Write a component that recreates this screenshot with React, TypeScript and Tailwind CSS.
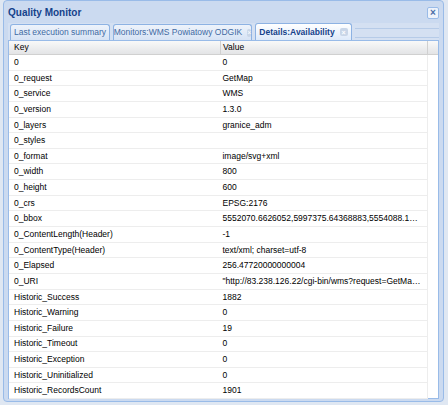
const rows: [string, string][] = [
  ['0', '0'],
  ['0_request', 'GetMap'],
  ['0_service', 'WMS'],
  ['0_version', '1.3.0'],
  ['0_layers', 'granice_adm'],
  ['0_styles', ''],
  ['0_format', 'image/svg+xml'],
  ['0_width', '800'],
  ['0_height', '600'],
  ['0_crs', 'EPSG:2176'],
  ['0_bbox', '5552070.6626052,5997375.64368883,5554088.16265523,5999000.1'],
  ['0_ContentLength(Header)', '-1'],
  ['0_ContentType(Header)', 'text/xml; charset=utf-8'],
  ['0_Elapsed', '256.47720000000004'],
  ['0_URI', '"http://83.238.126.22/cgi-bin/wms?request=GetMap&service=WMS'],
  ['Historic_Success', '1882'],
  ['Historic_Warning', '0'],
  ['Historic_Failure', '19'],
  ['Historic_Timeout', '0'],
  ['Historic_Exception', '0'],
  ['Historic_Uninitialized', '0'],
  ['Historic_RecordsCount', '1901'],
];

const TabClose = () => (
  <span className="ml-[5px] inline-flex h-[8px] w-[8px] items-center justify-center rounded-[2px] bg-[#c9d6e8] text-[7px] leading-none text-white">
    ×
  </span>
);

const App = () => {
  return (
    <div className="h-[405px] w-[448px] overflow-hidden bg-[#dfe7f2] pl-[3px] font-['Liberation_Sans',Arial,sans-serif] text-[8.5px]">
      <div className="flex h-[402px] w-[441px] flex-col rounded-[4px] border border-[#99bbe8] bg-[#cbdaf0] px-[4px] pb-[2px]">
        {/* title bar */}
        <div className="flex h-[22px] shrink-0 items-center justify-between pt-[1px]">
          <span className="text-[10px] font-bold text-[#15428b]">Quality Monitor</span>
          <span className="flex h-[12px] w-[12px] items-center justify-center rounded-[2px] border border-[#99bbe8] bg-[#eef3fb] text-[10px] font-bold leading-none text-[#4a6ea6]">
            ×
          </span>
        </div>
        {/* tab strip */}
        <div className="flex h-[18px] shrink-0 items-end gap-[3px] border-b border-[#99bbe8] bg-[#d4e0f2] pl-[2px]">
          <div className="flex h-[16px] w-[100px] items-center justify-center whitespace-nowrap rounded-t-[3px] border border-b-0 border-[#8db2e3] bg-gradient-to-b from-[#eef3fb] to-[#d6e3f5] text-[8.5px] text-[#416aa3]">
            Last execution summary
          </div>
          <div className="flex h-[16px] w-[139px] items-center justify-center whitespace-nowrap rounded-t-[3px] border border-b-0 border-[#8db2e3] bg-gradient-to-b from-[#eef3fb] to-[#d6e3f5] text-[8.5px] text-[#416aa3]">
            Monitors:WMS Powiatowy ODGIK
            <TabClose />
          </div>
          <div className="flex h-[17px] w-[97px] items-center justify-center whitespace-nowrap rounded-t-[3px] border border-b-0 border-[#8db2e3] bg-gradient-to-b from-[#ffffff] to-[#deeafa] text-[8.5px] font-bold text-[#15428b]">
            Details:Availability
            <TabClose />
          </div>
          <div className="mb-[2px] h-[10px] flex-1 border-y border-[#b6cbe8]" />
        </div>
        {/* grid */}
        <div className="flex min-h-0 flex-1 flex-col border border-t-0 border-[#99bbe8] bg-white">
          <div className="flex h-[14px] shrink-0 items-center border-b border-[#d0d0d0] bg-gradient-to-b from-[#f9f9f9] to-[#e3e4e6] text-black">
            <div className="w-[212px] border-r border-[#d0d0d0] pl-[5px]">Key</div>
            <div className="w-[207px] border-r border-[#d0d0d0] pl-[2px]">Value</div>
            <div className="flex-1" />
          </div>
          <div className="flex flex-col">
            {rows.map(([k, v]) => (
              <div key={k} className="flex h-[15.65px] items-center">
                <div className="flex h-full w-[419px] items-center border-b border-r border-[#ededed]">
                  <div className="w-[212px] truncate pl-[5px] text-black">{k}</div>
                  <div className="w-[207px] truncate pl-[2px] pr-[6px] text-black">{v}</div>
                </div>
              </div>
            ))}
          </div>
        </div>
      </div>
    </div>
  );
};

export default App;
